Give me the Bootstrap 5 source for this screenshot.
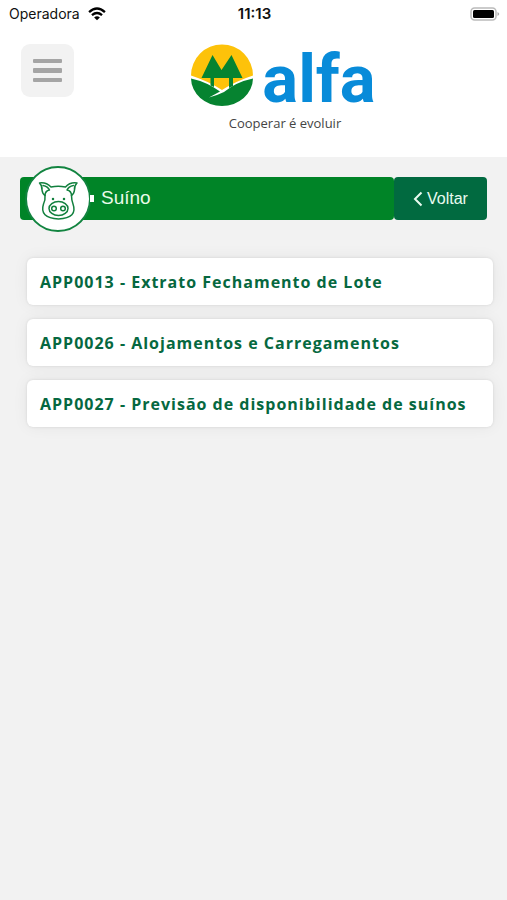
<!DOCTYPE html>
<html lang="pt-BR">
<head>
<meta charset="utf-8">
<meta name="viewport" content="width=device-width, initial-scale=1">
<title>Alfa - Suíno</title>
<link href="https://cdn.jsdelivr.net/npm/bootstrap@5.3.0/dist/css/bootstrap.min.css" rel="stylesheet">
<style>
body{background:#f2f2f2;font-family:"Liberation Sans",Arial,sans-serif}
.status-bar{height:28px;padding:0 7px 0 9px;font:14px/28px Inter,sans-serif;color:#111}
.status-bar svg{display:block}
.status-time{font-weight:600;font-size:15px}
.app-header{height:129px;padding:16px 21px 0}
.menu-btn{width:53px;height:53px;border-radius:9px;background:#f2f2f2;border:0}
.brand{width:184px;color:#444;text-decoration:none}
.brand-word{font:700 67px/70px Roboto,sans-serif;color:#088bd9}
.brand-tag{font:13px/18px "Open Sans",sans-serif;padding-left:4px}
.side-space{width:55px}
.title-bar{height:43px;margin:20px 20px 0 20px}
.title-name{background:#008427;color:#e9fbe9;border-radius:4px;font-size:19px;padding-left:5px}
.badge-pig{width:66px;height:66px;border:2px solid #128440;border-radius:50%;background:#fff}
.notch{width:4px;height:7px;background:#fff;margin-left:-1px;margin-right:6px}
.title-label{padding-left:1px}
.back-btn{width:93px;background:#016a40;color:#e9fbf0;border-radius:4px;font-size:16px;border:0}
.menu-list{padding:38px 14px 32px 27px;gap:14px}
.menu-link{height:47px;padding-left:13px;background:#fff;border-radius:6px;box-shadow:0 0 3px rgba(0,0,0,.1),0 0 16px rgba(0,0,0,.06);color:#066840;text-decoration:none;font:700 16px/24px "Open Sans",sans-serif;letter-spacing:1px}
</style>
<script src="https://cdn.jsdelivr.net/npm/bootstrap@5.3.0/dist/js/bootstrap.bundle.min.js"></script>
</head>
<body class="min-vh-100">
<div class="bg-white">
<div class="status-bar row g-0 align-items-center">
 <div class="col d-flex align-items-center gap-2"><span>Operadora</span>
 <svg width="18" height="14" viewBox="0 0 20 15" fill="none" stroke="#000" stroke-width="2.6"><path d="M1.200 5.300Q10-2.600 18.800 5.300M4.400 8.800Q10 4 15.600 8.800"/><path d="M10 14.500L6.800 11.300Q10 8.700 13.200 11.300Z" fill="#000" stroke="none"/></svg></div>
 <div class="col-auto status-time">11:13</div>
 <div class="col d-flex justify-content-end"><svg width="30" height="15" viewBox="0 0 30 15"><rect x="1" y="1" width="25" height="12" rx="3.500" fill="#fff" stroke="#bbb" stroke-width="1.5"/><rect x="3" y="3" width="21" height="8" rx="1.500"/><path d="M27.500 5Q31 7 27.500 9Z" fill="#aaa"/></svg></div>
</div>
<header class="app-header d-flex justify-content-between align-items-start">
 <button class="menu-btn d-flex align-items-center justify-content-center p-0" type="button" aria-label="Menu"><svg width="29" height="25" viewBox="0 0 29 25" fill="#a5a5a5"><rect y="1" width="29" height="4" rx="1"/><rect y="10" width="29" height="5" rx="1"/><rect y="20" width="29" height="4" rx="1"/></svg></button>
 <a class="brand ms-auto d-flex flex-column align-items-center" href="#">
 <span class="d-flex align-items-start gap-2"><svg width="64" height="64" viewBox="0 0 64 64"><path d="M1 31.500A31 31 0 0 1 63 31.500Q46 37 32 46Q18 37 1 31.500Z" fill="#fdc20a"/><path d="M22.500 11L31.500 26L41.500 11L52.500 34H43V42L39 44V34H24V43L20.500 41.500V34H11.500Z" fill="#068330"/><path d="M1 34.500Q17 38 30 47.500L19 53.500Q28 51 34 48Q46 38 63 34.500A31 28 0 0 1 32 62A31 28 0 0 1 1 34.500Z" fill="#068330"/></svg><span class="brand-word">alfa</span></span>
 <span class="brand-tag">Cooperar é evoluir</span></a>
 <div class="side-space ms-5 me-2"></div>
</header>
</div>
<main>
<div class="title-bar d-flex">
 <div class="title-name flex-grow-1 d-flex align-items-center"><span class="badge-pig d-flex align-items-center justify-content-center"><svg width="44" height="44" viewBox="0 0 44 44" fill="none" stroke="#12803e" stroke-width="1.500" stroke-linecap="round" stroke-linejoin="round"><path d="M15 10Q22 8.500 29.500 10Q34 5 41 6Q38 9 38.500 13Q38 17 35.500 18.500Q35.500 23 37 27Q42 41 22.500 42Q3 41 7.500 27Q9.500 23 9 18.500Q6.500 17 6 13Q6.500 9 3.500 6Q10 5 15 10Z"/><path d="M9 18.500Q9 14 13.500 13Q12 9.500 7 8.500M35.500 18.500Q35.500 14 31 13Q32.500 9.500 37.500 8.500"/><ellipse cx="22.500" cy="31.500" rx="9.500" ry="7"/><circle cx="18" cy="31.500" r="2.300"/><circle cx="27" cy="31.500" r="2.300"/><path d="M17 22V22.100M28 22V22.100" stroke-width="2.500"/></svg></span><span class="notch"></span><span class="title-label">Suíno</span></div>
 <button class="back-btn d-flex align-items-center justify-content-center gap-1 p-0" type="button"><svg width="10" height="16" viewBox="0 0 10 16" fill="none" stroke="currentColor" stroke-width="2"><path d="M8.500 1.500L2 8L8.500 14.500"/></svg>Voltar</button>
</div>
<nav class="menu-list d-flex flex-column" aria-label="Aplicativos">
 <a class="menu-link d-flex align-items-center" href="#">APP0013 - Extrato Fechamento de Lote</a>
 <a class="menu-link d-flex align-items-center" href="#">APP0026 - Alojamentos e Carregamentos</a>
 <a class="menu-link d-flex align-items-center" href="#">APP0027 - Previsão de disponibilidade de suínos</a>
</nav>
</main>
</body>
</html>
